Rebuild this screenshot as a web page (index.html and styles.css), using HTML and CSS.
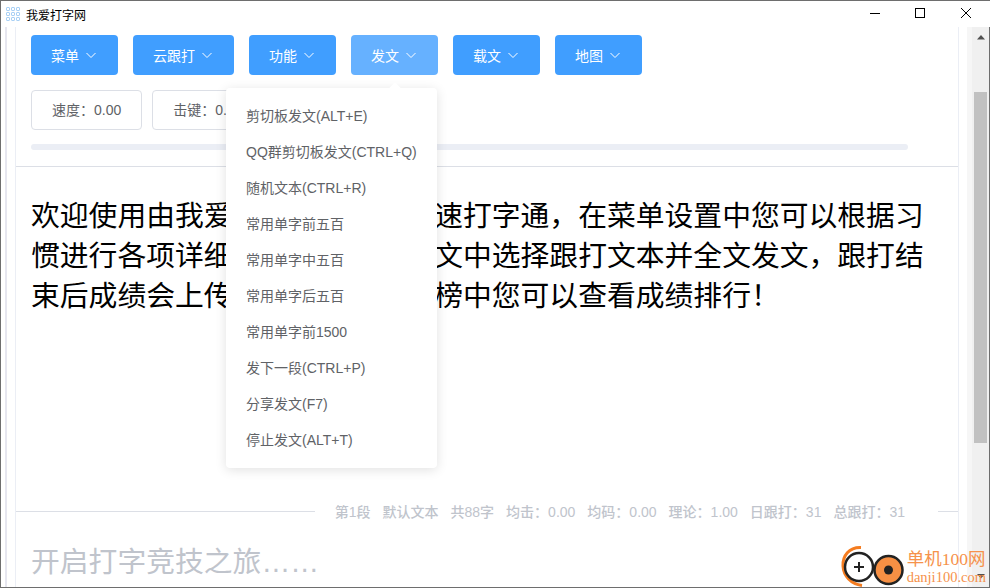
FILE: index.html
```html
<!DOCTYPE html>
<html lang="zh-CN">
  <head>
    <meta charset="UTF-8">
    <title>我爱打字网</title>
    <link rel="stylesheet" href="styles.css">
  </head>
  <body>
    <div class="window">
      <header class="titlebar">
        <svg class="app-icon" width="14" height="14" viewBox="0 0 14 14" fill="none" stroke="#a9d0f5">
          <rect x="0.5" y="0.5" width="3" height="3" rx="0.5"/>
          <rect x="5.5" y="0.5" width="3" height="3" rx="0.5"/>
          <rect x="10.5" y="0.5" width="3" height="3" rx="0.5"/>
          <rect x="0.5" y="5.5" width="3" height="3" rx="0.5"/>
          <rect x="5.5" y="5.5" width="3" height="3" rx="0.5"/>
          <rect x="10.5" y="5.5" width="3" height="3" rx="0.5"/>
          <rect x="0.5" y="10.5" width="3" height="3" rx="0.5"/>
          <rect x="5.5" y="10.5" width="3" height="3" rx="0.5"/>
          <rect x="10.5" y="10.5" width="3" height="3" rx="0.5"/>
        </svg>
        <span class="app-title">我爱打字网</span>
        <div class="space"></div>
        <div class="window-controls">
          <svg width="46" height="26" viewBox="0 0 46 26" stroke="#000" fill="none"><path d="M19 12.5h10"/></svg>
          <svg width="46" height="26" viewBox="0 0 46 26" stroke="#000" fill="none"><rect x="18.5" y="7.5" width="9" height="9"/></svg>
          <svg width="46" height="26" viewBox="0 0 46 26" stroke="#000" fill="none"><path d="M18 7l10 10M28 7l-10 10"/></svg>
        </div>
      </header>

      <div class="client">
        <div class="gutter"></div>
        <main class="page">
          <section class="head">
            <nav class="toolbar">
              <button class="btn">菜单<svg class="caret" viewBox="0 0 14 14"><path d="M2.5 5l4.5 4.5L11.500 5"/></svg></button>
              <button class="btn">云跟打<svg class="caret" viewBox="0 0 14 14"><path d="M2.5 5l4.5 4.5L11.500 5"/></svg></button>
              <button class="btn">功能<svg class="caret" viewBox="0 0 14 14"><path d="M2.5 5l4.5 4.5L11.500 5"/></svg></button>
              <div class="dropdown">
                <button class="btn btn-hover">发文<svg class="caret" viewBox="0 0 14 14"><path d="M2.5 5l4.5 4.5L11.500 5"/></svg></button>
                <ul class="menu">
                  <li>剪切板发文(ALT+E)</li>
                  <li>QQ群剪切板发文(CTRL+Q)</li>
                  <li>随机文本(CTRL+R)</li>
                  <li>常用单字前五百</li>
                  <li>常用单字中五百</li>
                  <li>常用单字后五百</li>
                  <li>常用单字前1500</li>
                  <li>发下一段(CTRL+P)</li>
                  <li>分享发文(F7)</li>
                  <li>停止发文(ALT+T)</li>
                </ul>
              </div>
              <button class="btn">载文<svg class="caret" viewBox="0 0 14 14"><path d="M2.5 5l4.5 4.5L11.500 5"/></svg></button>
              <button class="btn">地图<svg class="caret" viewBox="0 0 14 14"><path d="M2.5 5l4.5 4.5L11.500 5"/></svg></button>
            </nav>
            <div class="stats">
              <div class="stat">速度：0.00</div>
              <div class="stat">击键：0.00</div>
              <div class="stat">码长：0.00</div>
            </div>
            <div class="progress"></div>
          </section>

          <p class="article">欢迎使用由我爱打字网提供的极速打字通，在菜单设置中您可以根据习惯进行各项详细设置，您可在载文中选择跟打文本并全文发文，跟打结束后成绩会上传至服务器，排行榜中您可以查看成绩排行！</p>

          <div class="status">
            <div class="status-line"></div>
            <div class="status-text">
              <span>第1段</span>
              <span>默认文本</span>
              <span>共88字</span>
              <span>均击：0.00</span>
              <span>均码：0.00</span>
              <span>理论：1.00</span>
              <span>日跟打：31</span>
              <span>总跟打：31</span>
            </div>
            <div class="status-line status-line-end"></div>
          </div>

          <p class="typing">开启打字竞技之旅……</p>
        </main>

        <div class="scrollbar">
          <svg class="arrow" width="8" height="5" viewBox="0 0 8 5"><path d="M4 0l4 4.500H0z" fill="#505050"/></svg>
          <div class="thumb"></div>
          <svg class="arrow" width="8" height="5" viewBox="0 0 8 5"><path d="M0 0h8L4 4.500z" fill="#505050"/></svg>
        </div>
      </div>

      <div class="watermark">
        <svg width="66" height="43" viewBox="0 0 66 43" fill="none">
          <path d="M21 2.500C9 2 2.500 11 3 21c.5 10 8 18 19 19.500" stroke="#f57c1f" stroke-width="3"/>
          <circle cx="19" cy="22" r="14" stroke="#222" stroke-width="2.500" fill="#fff"/>
          <path d="M14 22h10M19 17v10" stroke="#222" stroke-width="2"/>
          <circle cx="48.500" cy="25" r="14" stroke="#222" stroke-width="2.500" fill="#f79044"/>
          <circle cx="48.500" cy="25" r="4.500" fill="#222"/>
        </svg>
        <div class="watermark-text">
          <div class="watermark-name">单机100网</div>
          <div class="watermark-url">danji100.com</div>
        </div>
      </div>
    </div>
  </body>
</html>
```

FILE: styles.css
```css
html, body {
  height: 100%;
  margin: 0;
  overflow: hidden;
}
body {
  background: #fff;
  font-family: "Liberation Sans", "Noto Sans CJK SC", sans-serif;
}
p {
  margin: 0;
}
.space {
  flex-grow: 1;
}

.window {
  border: 1px solid #6e6e6e;
  border-right-width: 0;
  box-sizing: border-box;
  display: flex;
  flex-direction: column;
  height: 588px;
  position: relative;
  width: 990px;
}

.titlebar {
  align-items: center;
  display: flex;
  flex: none;
  height: 26px;
}
.app-icon {
  margin-left: 5px;
  margin-right: 6px;
}
.app-title {
  color: #000;
  font-size: 12px;
}
.window-controls {
  display: flex;
  margin-right: 1px;
}
.window-controls svg {
  display: block;
}

.client {
  display: flex;
  flex: 1;
  min-height: 0;
}
.gutter {
  border-right: 2px solid #e6e6ef;
  box-sizing: border-box;
  flex: none;
  margin-right: 8px;
  width: 6px;
}
.page {
  border-left: 1px solid #ebeef5;
  border-right: 1px solid #ebeef5;
  display: flex;
  flex: none;
  flex-direction: column;
  width: 942px;
}

.head {
  border-bottom: 1px solid #dcdfe6;
  padding: 8px 15px 16px;
}
.toolbar {
  display: flex;
  gap: 15px;
}
.dropdown {
  position: relative;
}
.btn {
  align-items: center;
  background: #409eff;
  border: 0;
  border-radius: 4px;
  color: #fff;
  display: flex;
  font-family: inherit;
  font-size: 14px;
  height: 40px;
  padding: 0 20px;
}
.btn-hover {
  background: #66b1ff;
}
.caret {
  fill: none;
  height: 14px;
  margin-left: 5px;
  stroke: #fff;
  stroke-width: 1;
  width: 14px;
}

.menu {
  background: #fff;
  border-radius: 4px;
  box-shadow: 0 2px 12px rgba(0, 0, 0, .12);
  color: #606266;
  font-size: 14px;
  left: -125px;
  line-height: 36px;
  list-style: none;
  margin: 0;
  padding: 10px 0;
  position: absolute;
  top: 53px;
  white-space: nowrap;
  width: 211px;
  z-index: 2;
}
.menu::before {
  background: #fff;
  content: "";
  height: 8px;
  left: 165px;
  position: absolute;
  top: -4px;
  transform: rotate(45deg);
  width: 8px;
}
.menu li {
  padding: 0 20px;
}

.stats {
  display: flex;
  gap: 10px;
  margin-top: 15px;
}
.stat {
  border: 1px solid #dcdfe6;
  border-radius: 4px;
  box-sizing: border-box;
  color: #606266;
  font-size: 14px;
  height: 40px;
  line-height: 38px;
  padding: 0 20px;
}
.progress {
  background: #ebeef5;
  border-radius: 3px;
  height: 6px;
  margin-top: 14px;
  width: 877px;
}

.article {
  color: #000;
  flex: 1;
  font-size: 28.8px;
  line-height: 40px;
  padding: 29px 15px 0;
}

.status {
  align-items: center;
  display: flex;
  height: 20px;
  margin-bottom: 21px;
}
.status-line {
  background: #dcdfe6;
  flex: 1;
  height: 1px;
}
.status-line-end {
  flex: none;
  width: 20px;
}
.status-text {
  color: #c0c4cc;
  display: flex;
  font-size: 14px;
  font-weight: 500;
  gap: 12px;
  padding: 0 33px 0 20px;
  white-space: nowrap;
}

.typing {
  color: #c0c4cc;
  font-size: 28.8px;
  height: 40px;
  line-height: 40px;
  margin-bottom: 5px;
  padding: 0 15px;
}

.scrollbar {
  align-items: center;
  background: #f0f0f0;
  border-left: 5px solid #f6f6f6;
  border-right: 1px solid #6e6e6e;
  box-sizing: border-box;
  display: flex;
  flex: none;
  flex-direction: column;
  margin-left: 8px;
  padding: 8px 0 8px;
  width: 23px;
}
.thumb {
  background: #c1c1c1;
  flex: none;
  height: 351px;
  margin-bottom: auto;
  margin-top: 52px;
  width: 13px;
}

.watermark {
  align-items: flex-start;
  bottom: -1px;
  display: flex;
  position: absolute;
  right: 4px;
}
.watermark svg {
  display: block;
}
.watermark-text {
  color: #f6924b;
  margin-left: 1px;
  white-space: nowrap;
}
.watermark-name {
  font-family: "Liberation Serif", "Noto Sans CJK SC", serif;
  font-size: 17.500px;
  line-height: 22px;
  margin-top: 3px;
}
.watermark-url {
  font-family: "Liberation Serif", serif;
  font-size: 14.500px;
  line-height: 15px;
}
```
